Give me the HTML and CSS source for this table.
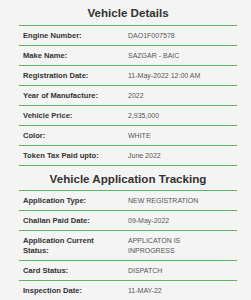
FILE: index.html
```html
<!DOCTYPE html>
<html>
<head>
<meta charset="utf-8">
<link rel="stylesheet" href="styles.css">
</head>
<body>
<div class="panel">
  <h2 class="title first">Vehicle Details</h2>
  <div class="row"><div class="label">Engine Number:</div><div class="value">DAO1F007578</div></div>
  <div class="row"><div class="label">Make Name:</div><div class="value">SAZGAR - BAIC</div></div>
  <div class="row"><div class="label">Registration Date:</div><div class="value">11-May-2022 12:00 AM</div></div>
  <div class="row"><div class="label">Year of Manufacture:</div><div class="value">2022</div></div>
  <div class="row"><div class="label">Vehicle Price:</div><div class="value">2,935,000</div></div>
  <div class="row"><div class="label">Color:</div><div class="value">WHITE</div></div>
  <div class="row"><div class="label">Token Tax Paid upto:</div><div class="value">June 2022</div></div>
  <h2 class="title second">Vehicle Application Tracking</h2>
  <div class="row"><div class="label">Application Type:</div><div class="value">NEW REGISTRATION</div></div>
  <div class="row"><div class="label">Challan Paid Date:</div><div class="value">09-May-2022</div></div>
  <div class="row tall"><div class="label">Application Current Status:</div><div class="value">APPLICATON IS INPROGRESS</div></div>
  <div class="row"><div class="label">Card Status:</div><div class="value">DISPATCH</div></div>
  <div class="row"><div class="label">Inspection Date:</div><div class="value">11-MAY-22</div></div>
</div>
</body>
</html>
```
FILE: styles.css
```css
html, body {
  margin: 0;
  padding: 0;
  background: #f4f4f4;
}
body {
  font-family: "Liberation Sans", Arial, sans-serif;
  color: #333;
}
.panel {
  width: 218px;
  margin-left: 19px;
}
.title {
  margin: 0;
  font-size: 11.6px;
  font-weight: bold;
  color: #333;
  text-align: center;
  border-bottom: 1px solid #5cb85c;
  box-sizing: border-box;
  display: flex;
  align-items: center;
  justify-content: center;
}
.title.first {
  height: 26px;
}
.title.second {
  height: 25px;
}
.row {
  display: grid;
  grid-template-columns: 109px 1fr;
  align-items: center;
  height: 20px;
  box-sizing: border-box;
  border-bottom: 1px solid #5cb85c;
}
.row.tall {
  height: 30px;
}
.label {
  padding: 0 14px 0 4px;
  font-size: 7.6px;
  font-weight: bold;
  color: #333;
  line-height: 10px;
}
.value {
  padding-right: 10px;
  font-size: 7px;
  color: #555;
  line-height: 10px;
}
```
